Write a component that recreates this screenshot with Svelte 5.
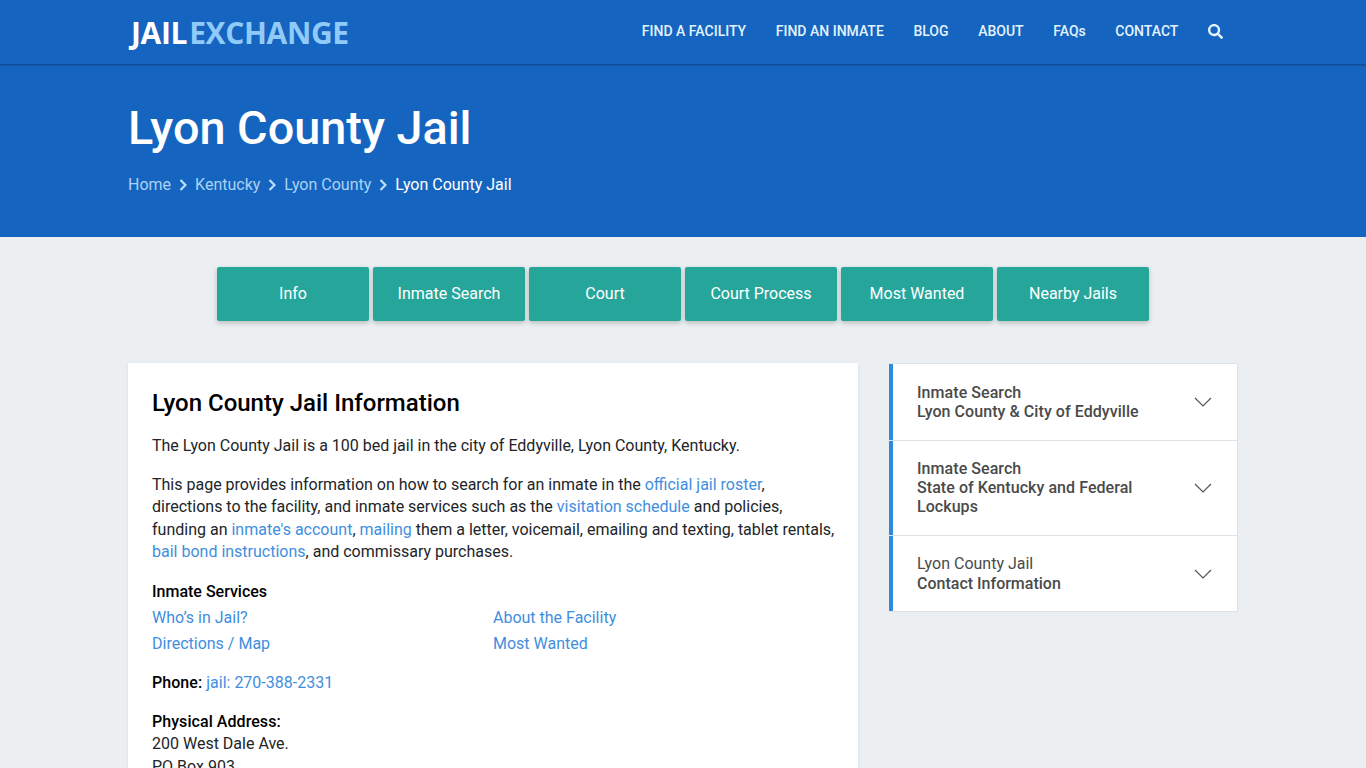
<script>
	const navLinks = ['FIND A FACILITY', 'FIND AN INMATE', 'BLOG', 'ABOUT', 'FAQs', 'CONTACT'];
	const crumbs = ['Home', 'Kentucky', 'Lyon County'];
	const tabs = ['Info', 'Inmate Search', 'Court', 'Court Process', 'Most Wanted', 'Nearby Jails'];
</script>

<header class="topbar">
	<div class="container topbar-inner">
		<a class="logo" href="#top"><span class="logo-jail">JAIL</span><span class="logo-exchange">EXCHANGE</span></a>
		<nav class="nav">
			{#each navLinks as link}
				<a href="#top">{link}</a>
			{/each}
			<a class="search" href="#top" aria-label="Search">
				<svg width="15" height="15" viewBox="0 0 512 512" fill="currentColor">
					<path d="M505 442.700L405.300 343c-4.500-4.500-10.600-7-17-7H372c27.600-35.300 44-79.700 44-128C416 93.100 322.900 0 208 0S0 93.100 0 208s93.100 208 208 208c48.300 0 92.700-16.400 128-44v16.300c0 6.400 2.500 12.500 7 17l99.700 99.700c9.400 9.400 24.600 9.400 33.900 0l28.300-28.300c9.400-9.400 9.400-24.600.1-34zM208 336c-70.700 0-128-57.200-128-128 0-70.700 57.200-128 128-128 70.700 0 128 57.200 128 128 0 70.700-57.200 128-128 128z"/>
				</svg>
			</a>
		</nav>
	</div>
</header>

<section class="hero">
	<div class="container">
		<h1>Lyon County Jail</h1>
		<div class="breadcrumb">
			{#each crumbs as crumb}
				<a href="#top">{crumb}</a>
				<svg class="sep" width="8" height="12" viewBox="0 0 8 12" fill="none" stroke="currentColor" stroke-width="2.200">
					<path d="M1.500 1 6.500 6l-5 5"/>
				</svg>
			{/each}
			<span>Lyon County Jail</span>
		</div>
	</div>
</section>

<main class="page">
	<div class="tabs">
		{#each tabs as tab}
			<a class="tab" href="#top">{tab}</a>
		{/each}
	</div>

	<div class="container columns">
		<article class="card">
			<h2>Lyon County Jail Information</h2>
			<p>The Lyon County Jail is a 100 bed jail in the city of Eddyville, Lyon County, Kentucky.</p>
			<p>This page provides information on how to search for an inmate in the <a href="#top">official jail roster</a>, directions to the facility, and inmate services such as the <a href="#top">visitation schedule</a> and policies, funding an <a href="#top">inmate's account</a>, <a href="#top">mailing</a> them a letter, voicemail, emailing and texting, tablet rentals, <a href="#top">bail bond instructions</a>, and commissary purchases.</p>
			<h3>Inmate Services</h3>
			<div class="services">
				<a href="#top">Who’s in Jail?</a>
				<a href="#top">About the Facility</a>
				<a href="#top">Directions / Map</a>
				<a href="#top">Most Wanted</a>
			</div>
			<p class="phone"><b>Phone:</b> <a href="#top">jail: 270-388-2331</a></p>
			<p><b>Physical Address:</b><br />200 West Dale Ave.<br />PO Box 903<br />Eddyville, KY 42038</p>
		</article>

		<aside class="side">
			<div class="acc first">
				<div class="acc-text"><b>Inmate Search</b><br /><b>Lyon County &amp; City of Eddyville</b></div>
				<svg width="18" height="10" viewBox="0 0 18 10" fill="none" stroke="#555" stroke-width="1.200"><path d="M1 1l8 8 8-8"/></svg>
			</div>
			<div class="acc">
				<div class="acc-text"><b>Inmate Search</b><br /><b>State of Kentucky and Federal Lockups</b></div>
				<svg width="18" height="10" viewBox="0 0 18 10" fill="none" stroke="#555" stroke-width="1.200"><path d="M1 1l8 8 8-8"/></svg>
			</div>
			<div class="acc last">
				<div class="acc-text">Lyon County Jail<br /><b>Contact Information</b></div>
				<svg width="18" height="10" viewBox="0 0 18 10" fill="none" stroke="#555" stroke-width="1.200"><path d="M1 1l8 8 8-8"/></svg>
			</div>
		</aside>
	</div>
</main>

<style>
	:global(html) {
		overflow: hidden;
		height: 768px;
	}

	:global(body) {
		margin: 0;
		background: #eceff1;
		font-family: Roboto, "Liberation Sans", sans-serif;
		font-size: 16px;
		line-height: 1.5;
		color: #212529;
	}

	a {
		text-decoration: none;
	}

	.container {
		width: 1110px;
		margin: 0 auto;
	}

	.topbar {
		background: #1565c0;
		height: 64px;
		box-shadow: 0 1px 2px rgba(0, 0, 0, 0.35);
		position: relative;
	}

	.topbar-inner {
		display: flex;
		justify-content: space-between;
		align-items: center;
		height: 64px;
	}

	.logo {
		font-family: "Open Sans", sans-serif;
		font-weight: 700;
		font-size: 30px;
		letter-spacing: -0.35px;
		line-height: 1;
		padding: 1px 0 0 3px;
	}

	.logo-jail {
		color: #fff;
	}

	.logo-exchange {
		color: #90caf9;
		margin-left: 2px;
	}

	.nav {
		display: flex;
		align-items: center;
		gap: 29.600px;
		padding-right: 15px;
		margin-top: -2px;
	}

	.nav a {
		color: #e3f2fd;
		font-size: 14px;
		font-weight: 500;
	}

	.search {
		display: flex;
		color: #e3f2fd;
	}

	.hero {
		background: #1565c0;
		height: 173px;
	}

	h1 {
		margin: 0;
		padding-top: 34px;
		color: #fff;
		font-size: 46.800px;
		font-weight: 500;
		line-height: 60px;
	}

	.breadcrumb {
		display: flex;
		align-items: center;
		margin-top: 15px;
		color: #bbdefb;
		line-height: 24px;
	}

	.breadcrumb a {
		color: #bbdefb;
		opacity: 0.9;
	}

	.sep {
		margin: 0 8px;
	}

	.breadcrumb span {
		color: #fff;
		font-weight: 400;
	}

	.page {
		padding-top: 30px;
		padding-bottom: 40px;
	}

	.tabs {
		display: flex;
		justify-content: center;
		gap: 4px;
	}

	.tab {
		width: 152px;
		height: 54px;
		display: flex;
		align-items: center;
		justify-content: center;
		background: #26a69a;
		color: #fff;
		border-radius: 2px;
		box-shadow: 0 2px 5px rgba(0, 0, 0, 0.22);
	}

	.columns {
		display: grid;
		grid-template-columns: 730px 349px;
		column-gap: 31px;
		align-items: start;
		margin-top: 42px;
	}

	.card {
		background: #fff;
		padding: 25px 22px 30px 24px;
		box-shadow: 0 1px 3px rgba(0, 0, 0, 0.08);
	}

	h2 {
		margin: 0 0 16px;
		font-size: 24px;
		font-weight: 500;
		line-height: 31px;
		color: #000;
	}

	.card p {
		margin: 0 0 16px;
		line-height: 22.500px;
	}

	.card .phone {
		margin-bottom: 16.500px;
	}

	.card a {
		color: #3f8ede;
	}

	h3 {
		margin: 0 0 2px;
		font-size: 16px;
		font-weight: 500;
		line-height: 24px;
		color: #000;
	}

	.card b {
		font-weight: 500;
		letter-spacing: 0.06px;
		color: #000;
	}

	.services {
		display: grid;
		grid-template-columns: 341px 1fr;
		row-gap: 3px;
		margin-bottom: 17px;
		line-height: 23px;
	}

	.side {
		background: #fff;
		border: 1px solid #dee2e6;
		border-left: 0;
	}

	.acc {
		display: flex;
		align-items: center;
		justify-content: space-between;
		gap: 40px;
		padding: 18px 25px 19px 28px;
		box-shadow: inset 4px 0 0 #2e8bdc;
		border-bottom: 1px solid #dee2e6;
		color: #4a4a4a;
		line-height: 19px;
	}

	.acc.first {
		padding-top: 19px;
	}

	.acc.last {
		padding-bottom: 18px;
		border-bottom: 0;
		line-height: 19.500px;
	}

	.acc b {
		font-weight: 500;
		letter-spacing: 0.06px;
	}

	.acc.last b {
		letter-spacing: 0;
	}

	.acc-text {
		flex: 1;
	}
</style>
